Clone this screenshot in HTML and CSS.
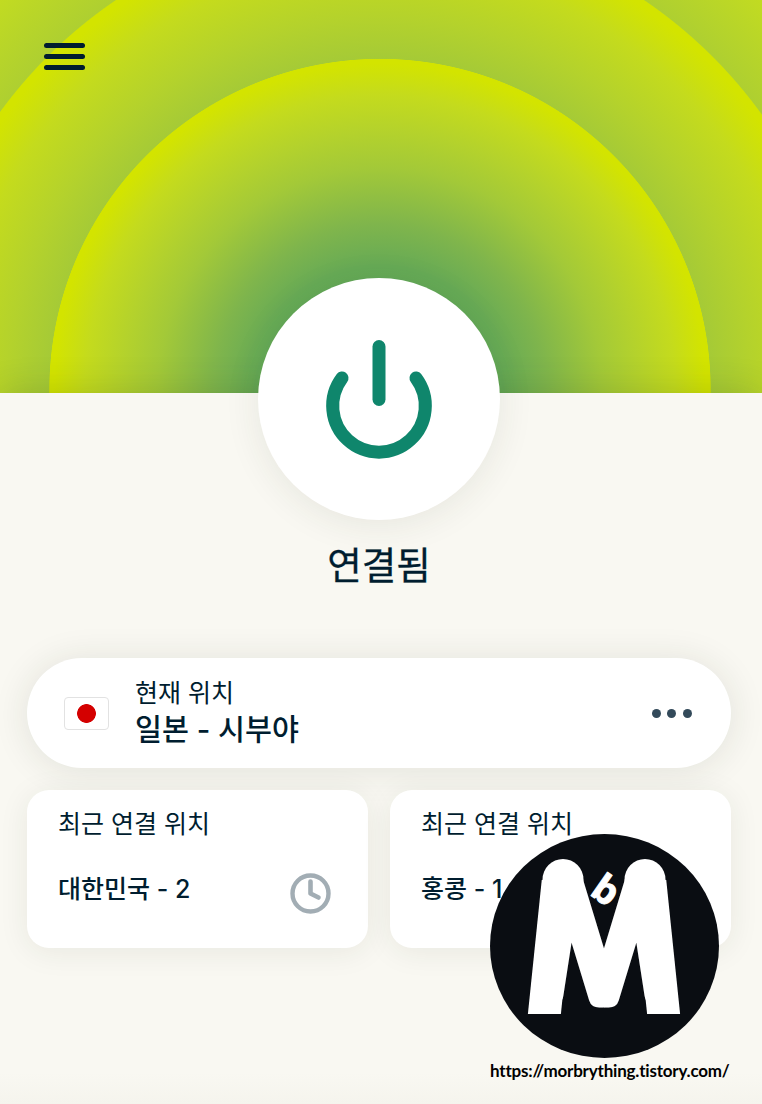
FILE: index.html
```
<!DOCTYPE html>
<html lang="ko">
<head>
    <meta charset="UTF-8">
    <meta name="viewport" content="width=device-width, initial-scale=1.0">
    <title>VPN</title>
    <link rel="stylesheet" href="styles.css">
</head>
<body>
    <div class="app">
        <header class="hero">
            <button type="button" class="menu_btn" aria-label="menu">
                <span></span>
                <span></span>
                <span></span>
            </button>
        </header>

        <main class="panel">
            <button type="button" class="power_btn" aria-label="power">
                <svg width="120" height="130" viewBox="0 0 120 130" fill="none" stroke="#0f866c" stroke-width="13" stroke-linecap="round">
                    <path d="M60 12.500V65.500"/>
                    <path d="M23 44A46.300 46.300 0 1 0 97 44"/>
                </svg>
            </button>
            <h1 class="status">연결됨</h1>

            <section class="location">
                <span class="flag"></span>
                <div class="location_text">
                    <p class="label">현재 위치</p>
                    <p class="name">일본 - 시부야</p>
                </div>
                <div class="dots">
                    <span></span>
                    <span></span>
                    <span></span>
                </div>
            </section>

            <section class="recent">
                <div class="card">
                    <p class="label">최근 연결 위치</p>
                    <div class="card_row">
                        <p class="place">대한민국 - 2</p>
                        <svg class="clock" width="42" height="42" viewBox="0 0 42 42" fill="none" stroke="#a2adb4" stroke-linecap="round" stroke-linejoin="round">
                            <circle cx="21.500" cy="21.500" r="18" stroke-width="4.400"/>
                            <path d="M21.500 9.500V21.500L29.500 25.500" stroke-width="4.600"/>
                        </svg>
                    </div>
                </div>
                <div class="card">
                    <p class="label">최근 연결 위치</p>
                    <div class="card_row">
                        <p class="place">홍콩 - 1</p>
                    </div>
                </div>
            </section>
        </main>

        <!-- blog watermark -->
        <div class="watermark">
            <svg width="229" height="224" viewBox="0 0 229 224">
                <defs>
                    <clipPath id="left"><rect x="0" y="0" width="114.500" height="180"/></clipPath>
                    <clipPath id="right"><rect x="114" y="0" width="115" height="180"/></clipPath>
                    <text id="letter" class="mark_m" x="0" y="0" text-anchor="middle" transform="translate(114 161.500) scale(1.110 1.050)">M</text>
                </defs>
                <ellipse cx="114.500" cy="112" rx="114.500" ry="112" fill="#0a0d12"/>
                <g clip-path="url(#left)">
                    <use href="#letter" transform="translate(24 0) skewX(-8.800)"/>
                </g>
                <g clip-path="url(#right)">
                    <use href="#letter" transform="translate(-24 0) skewX(8.800)"/>
                </g>
                <!-- rounded tops and flat feet -->
                <g fill="#fff">
                    <circle cx="73" cy="45.500" r="20.500"/>
                    <circle cx="155" cy="45.500" r="20.500"/>
                    <rect x="38" y="46" width="33" height="134" transform="translate(18.500 0) skewX(-5.900)"/>
                    <rect x="157" y="46" width="33" height="134" transform="translate(-18.500 0) skewX(5.900)"/>
                </g>
                <text class="mark_b" transform="translate(98.500 60) rotate(35)">b</text>
            </svg>
            <p class="url">https://morbrything.tistory.com/</p>
        </div>
    </div>
</body>
</html>
```

FILE: styles.css
```
* {
    box-sizing: border-box;
}

body {
    margin: 0;
    color: #001d2f;
    background-color: #f9f8f2;
    font-family: Inter, "Noto Sans CJK KR", sans-serif;
}

h1, p {
    margin: 0;
}

button {
    border: 0;
    padding: 0;
    background: none;
}

.app {
    position: relative;
    width: 762px;
    height: 1104px;
    overflow: hidden;
}

/* rings */
.hero {
    height: 393px;
    padding: 43px 44px;
    background:
        radial-gradient(circle 331px at 380px 389.5px, #4a9a5c 0%, #66aa56 37%, #7fb54c 50%, #a3c938 67%, #b4d22c 78%, #c4db1d 89%, #d3e400 98.5%, #d3e400 99.8%, transparent 100%),
        radial-gradient(circle 471px at 380px 389.5px, #a3c938 69%, #b4d22c 79%, #c4db1d 90%, #d3e400 98.5%, #d3e400 99.8%, transparent 100%),
        radial-gradient(circle 611px at 380px 389.5px, #aecf31 77%, #c3dc20 90%, #d3e400 100%);
}

.menu_btn {
    display: flex;
    flex-direction: column;
    gap: 6px;
    width: 41px;
}

.menu_btn span {
    height: 5px;
    border-radius: 3px;
    background-color: #001d2f;
}

.panel {
    display: flex;
    flex-direction: column;
    align-items: center;
    height: 711px;
    padding: 0 31px 0 27px;
    background: linear-gradient(#f9f8f2 680px, #f5f4ed 711px);
    box-shadow: 0 0 34px rgba(40, 60, 20, 0.2);
}

.power_btn {
    display: flex;
    align-items: center;
    justify-content: center;
    flex-shrink: 0;
    width: 242px;
    height: 242px;
    margin-top: -115px;
    border-radius: 50%;
    background-color: #fff;
    box-shadow: 0 5px 36px rgba(40, 50, 30, 0.09);
}

.status {
    margin-top: 19px;
    font-size: 37.5px;
    line-height: 54px;
    font-weight: 400;
    -webkit-text-stroke: 0.3px #001d2f;
}

.location {
    display: flex;
    align-items: center;
    width: 100%;
    height: 110px;
    margin-top: 65px;
    padding: 0 39.5px 0 37px;
    border-radius: 55px;
    background-color: #fff;
    box-shadow: 0 2px 36px rgba(40, 50, 30, 0.11);
}

.flag {
    width: 45px;
    height: 33px;
    border: 1px solid #e2e2e2;
    border-radius: 4px;
    background: radial-gradient(circle, #d40000 9px, #fff 9.7px);
}

.location_text {
    margin-left: 26px;
}

.label {
    font-size: 25px;
    line-height: 34px;
}

.name {
    font-size: 29.3px;
    line-height: 40px;
    font-weight: 500;
}

.dots {
    display: flex;
    gap: 6.5px;
    margin-left: auto;
}

.dots span {
    width: 9px;
    height: 9px;
    border-radius: 50%;
    background-color: #334a5a;
}

.recent {
    display: grid;
    grid-template-columns: 1fr 1fr;
    gap: 22px;
    width: 100%;
    margin-top: 22px;
}

.card {
    height: 158px;
    padding: 17px 37px 0 31px;
    border-radius: 22px;
    background-color: #fff;
    box-shadow: 0 4px 30px rgba(40, 50, 30, 0.08);
}

.card_row {
    display: flex;
    align-items: center;
    justify-content: space-between;
    height: 40px;
    margin-top: 28px;
}

.place {
    font-size: 25px;
    line-height: 34px;
    font-weight: 500;
}

.clock {
    margin-top: 8px;
}

.watermark {
    position: absolute;
    left: 490px;
    top: 834px;
    width: 240px;
}

.watermark svg {
    display: block;
}

.mark_m {
    font-family: Inter, sans-serif;
    font-size: 150px;
    font-weight: 100;
    fill: #fff;
    stroke: #fff;
    stroke-width: 22px;
    stroke-linejoin: round;
}

.mark_b {
    font-family: "Open Sans", sans-serif;
    font-size: 38px;
    font-weight: 700;
    fill: #fff;
    stroke: #fff;
    stroke-width: 1px;
    stroke-linejoin: round;
}

.url {
    margin-top: 1px;
    color: #000;
    font-family: Lato, sans-serif;
    font-size: 17px;
    line-height: 24px;
    font-weight: 700;
    letter-spacing: -0.2px;
    white-space: nowrap;
}
```
